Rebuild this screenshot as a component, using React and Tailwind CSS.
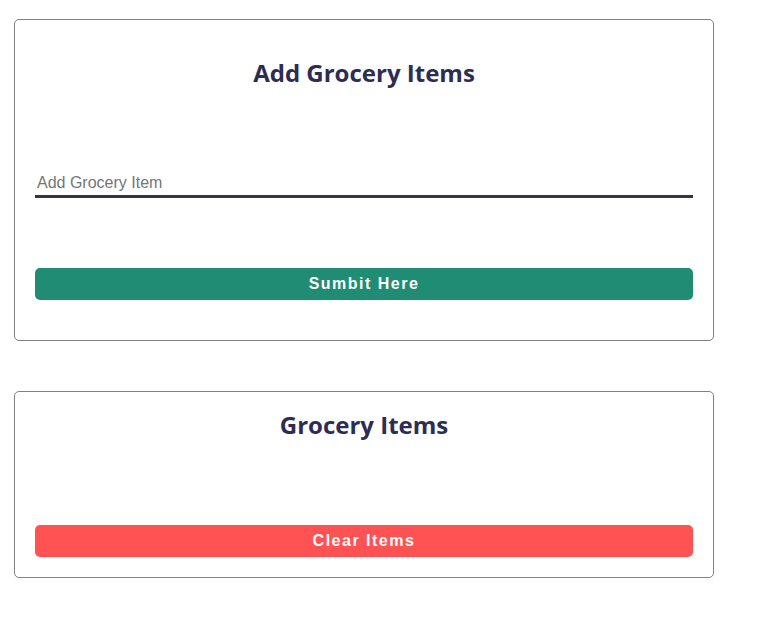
export default function App() {
  return (
    <div className="min-h-screen bg-white pt-[19px] pl-[14px]">
      <div className="w-[700px] rounded-[5px] border border-[#808080] px-5 pt-[37px] pb-[40px]">
        <h2 className="text-center text-[24px] leading-[32px] font-bold text-[#2c2c54] [font-family:'Comic_Sans_MS','Open_Sans',sans-serif]">
          Add Grocery Items
        </h2>
        <input
          type="text"
          placeholder="Add Grocery Item"
          className="mt-[81px] block h-[28px] w-full border-b-[3px] border-[#30374d] px-[2px] text-[16px] text-[#333] outline-none placeholder:text-[#757575] [font-family:'Liberation_Sans',Arial,sans-serif]"
        />
        <button className="mt-[70px] block h-8 w-full rounded-[5px] bg-[#218c74] text-[16px] font-bold tracking-[1.5px] text-white [font-family:'Liberation_Sans',Arial,sans-serif]">
          Sumbit Here
        </button>
      </div>

      <div className="mt-[50px] w-[700px] rounded-[5px] border border-[#808080] px-5 pt-[17px] pb-[20px]">
        <h2 className="text-center text-[24px] leading-[32px] font-bold text-[#2c2c54] [font-family:'Comic_Sans_MS','Open_Sans',sans-serif]">
          Grocery Items
        </h2>
        <button className="mt-[84px] block h-8 w-full rounded-[5px] bg-[#ff5252] text-[16px] font-bold tracking-[1.5px] text-white [font-family:'Liberation_Sans',Arial,sans-serif]">
          Clear Items
        </button>
      </div>
    </div>
  );
}
